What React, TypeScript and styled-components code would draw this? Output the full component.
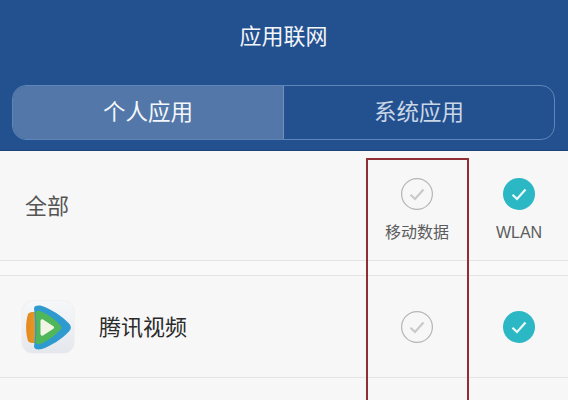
import React from "react";
import styled, { createGlobalStyle } from "styled-components";

const GlobalStyle = createGlobalStyle`
  html, body {
    margin: 0;
    padding: 0;
    background: #f7f7f7;
  }
  body {
    font-family: "Noto Sans CJK SC", "Liberation Sans", sans-serif;
  }
`;

const Check: React.FC<{ on?: boolean }> = ({ on }) => (
  <CheckMark viewBox="0 0 32 32" on={on ? 1 : 0}>
    <circle cx="16" cy="16" r={on ? 16 : 15.4} />
    <path d="M9.5 16.8 L14 21 L22.5 11.5" />
  </CheckMark>
);

const VideoLogo = () => (
  <LogoBox>
    <svg viewBox="0 0 52 52" width="52" height="52">
      <defs>
        <linearGradient id="leftLeaf" x1="0" y1="0" x2="1" y2="0">
          <stop offset="0" stopColor="#e8861f" />
          <stop offset="1" stopColor="#dca52a" />
        </linearGradient>
      </defs>
      <path
        d="M6 13 C8 10.5 12 10.5 18 12 L18 41 C12 42.5 8 42.5 6 40 C3.5 32 3.5 21 6 13 Z"
        fill="url(#leftLeaf)"
      />
      <path
        d="M12 7 C13 4.5 16 4 20 5 C29 8 40 15 47 22.5 C49.5 25 49.5 28 47 30.5 C40 38 29 45 20 48 C16 49 13 48.5 12 46 C13.5 33 13.5 20 12 7 Z"
        fill="#2f9ad0"
      />
      <path
        d="M13.5 11.5 C14 10 16 9.5 18 10 C25 12.500 33 18 38 24 C40 25.5 40 27.5 38 29 C33 35 25 40.500 18 43 C16 43.500 14 43 13.5 41.500 C15 32 15 21 13.5 11.500 Z"
        fill="#4fb65a"
      />
      <path
        d="M18.5 20 C18.5 18.5 20 18 21 18.5 L31 25 C32.5 26 32.5 27 31 28 L21 34.5 C20 35 18.5 34.5 18.5 33 Z"
        fill="#f1f5e6"
      />
    </svg>
  </LogoBox>
);

export default function App() {
  return (
    <>
      <GlobalStyle />
      <Page>
        <Header>
          <Title>应用联网</Title>
          <Tabs>
            <Tab active>个人应用</Tab>
            <Tab>系统应用</Tab>
          </Tabs>
        </Header>
        <AllRow>
          <AllLabel>全部</AllLabel>
          <Column>
            <Check />
            <ColumnLabel>移动数据</ColumnLabel>
          </Column>
          <Column>
            <Check on />
            <ColumnLabel>WLAN</ColumnLabel>
          </Column>
        </AllRow>
        <Gap />
        <AppRow>
          <VideoLogo />
          <AppName>腾讯视频</AppName>
          <Column>
            <Check />
          </Column>
          <Column>
            <Check on />
          </Column>
        </AppRow>
        <Highlight />
      </Page>
    </>
  );
}

const Page = styled.div`
  position: relative;
  width: 568px;
  height: 400px;
  overflow: hidden;
  background: #f7f7f7;
`;

const Header = styled.header`
  height: 151px;
  box-sizing: border-box;
  padding: 0 13px 0 12px;
  display: flex;
  flex-direction: column;
  background: #23508f;
  border-bottom: 1px solid #1d4477;
`;

const Title = styled.h1`
  margin: 0;
  height: 85px;
  padding-bottom: 18px;
  box-sizing: border-box;
  display: flex;
  align-items: center;
  justify-content: center;
  font-size: 22px;
  font-weight: 400;
  color: #f2f5f9;
`;

const Tabs = styled.div`
  height: 55px;
  box-sizing: border-box;
  display: flex;
  border: 1px solid #5f86b8;
  border-radius: 14px;
  overflow: hidden;
`;

const Tab = styled.div<{ active?: boolean }>`
  width: 271px;
  flex: ${(p) => (p.active ? "none" : "1")};
  display: flex;
  align-items: center;
  justify-content: center;
  font-size: 22.5px;
  padding-bottom: 5px;
  box-sizing: border-box;
  color: ${(p) => (p.active ? "#f4f7fa" : "#c9d6e6")};
  background: ${(p) => (p.active ? "#5277a8" : "transparent")};
  border-right: ${(p) => (p.active ? "1px solid #6f92bf" : "none")};
`;

const AllRow = styled.section`
  height: 110px;
  box-sizing: border-box;
  padding: 27px 0 0 25px;
  display: flex;
  align-items: flex-start;
  border-bottom: 1px solid #e4e4e4;
`;

const AllLabel = styled.div`
  flex: 1;
  margin-top: 10px;
  font-size: 22px;
  line-height: 32px;
  color: #555;
`;

const Column = styled.div`
  width: 102px;
  display: flex;
  flex-direction: column;
  align-items: center;
  gap: 11px;

  &:last-child {
    width: 98px;
    margin-left: 2px;
  }
`;

const ColumnLabel = styled.div`
  font-family: "Liberation Sans", "Noto Sans CJK SC", sans-serif;
  font-size: 16px;
  line-height: 24px;
  color: #5c5c5c;
`;

const CheckMark = styled.svg<{ on: number }>`
  width: 32px;
  height: 32px;
  display: block;

  circle {
    fill: ${(p) => (p.on ? "#2bb8c4" : "none")};
    stroke: ${(p) => (p.on ? "none" : "#b5b5b5")};
    stroke-width: 1.2;
  }
  path {
    fill: none;
    stroke: ${(p) => (p.on ? "#eefafa" : "#c9c9c9")};
    stroke-width: 2.2;
  }
`;

const Gap = styled.div`
  height: 14px;
  background: #f9f9f9;
`;

const AppRow = styled.section`
  height: 103px;
  box-sizing: border-box;
  padding-left: 22px;
  display: flex;
  align-items: center;
  border-top: 1px solid #e4e4e4;
  border-bottom: 1px solid #e4e4e4;
`;

const LogoBox = styled.div`
  width: 52px;
  height: 52px;
  flex: none;
  border-radius: 11px;
  background: linear-gradient(#f6f7f9, #e4e7ec);
  box-shadow: 0 0 1px #c8c8c8;
  overflow: hidden;
`;

const AppName = styled.div`
  flex: 1;
  margin-left: 25px;
  padding-bottom: 4px;
  font-size: 22px;
  color: #2b2b2b;
`;

const Highlight = styled.div`
  position: absolute;
  left: 366px;
  top: 158px;
  width: 103px;
  height: 260px;
  box-sizing: border-box;
  border: 2px solid #8f2f35;
`;
